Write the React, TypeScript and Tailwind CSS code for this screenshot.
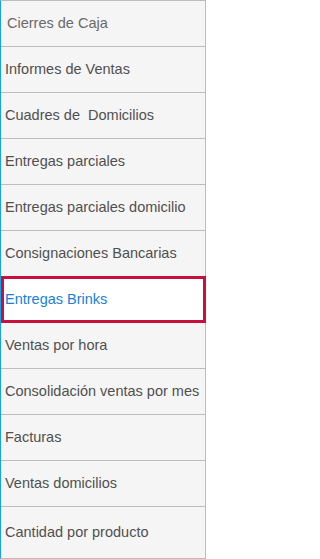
const items = [
  "Cierres de Caja",
  "Informes de Ventas",
  "Cuadres de  Domicilios",
  "Entregas parciales",
  "Entregas parciales domicilio",
  "Consignaciones Bancarias",
  "Entregas Brinks",
  "Ventas por hora",
  "Consolidación ventas por mes",
  "Facturas",
  "Ventas domicilios",
  "Cantidad por producto",
];

const selected = "Entregas Brinks";

export default function App() {
  return (
    <div className="w-[207px] h-[559px] bg-white">
      <nav
        className="w-[206px] flex flex-col border-t border-b border-t-[#bdbdbd] border-b-[#bdbdbd] border-l border-l-[#14a4ec] border-r border-r-[#bdbdbd] bg-[#f5f5f5] text-[14.5px] whitespace-pre"
        style={{ fontFamily: '"Liberation Sans", Arial, sans-serif' }}
      >
        {items.map((item, i) => {
          if (item === selected) {
            return (
              <a
                key={item}
                href="#"
                className="-mt-px -mr-px h-[47px] flex items-center pl-[1px] border-[3px] border-[#c8103f] bg-white text-[#1a7fd6]"
              >
                {item}
              </a>
            );
          }
          const last = i === items.length - 1;
          return (
            <a
              key={item}
              href="#"
              className={
                (last ? "h-[51px] " : "h-[46px] border-b border-[#bdbdbd] ") +
                (i === 0
                  ? "pl-[6px] text-[#6a6a6a] "
                  : "pl-[4px] text-[#505050] ") +
                "flex items-center"
              }
            >
              {item}
            </a>
          );
        })}
      </nav>
    </div>
  );
}
